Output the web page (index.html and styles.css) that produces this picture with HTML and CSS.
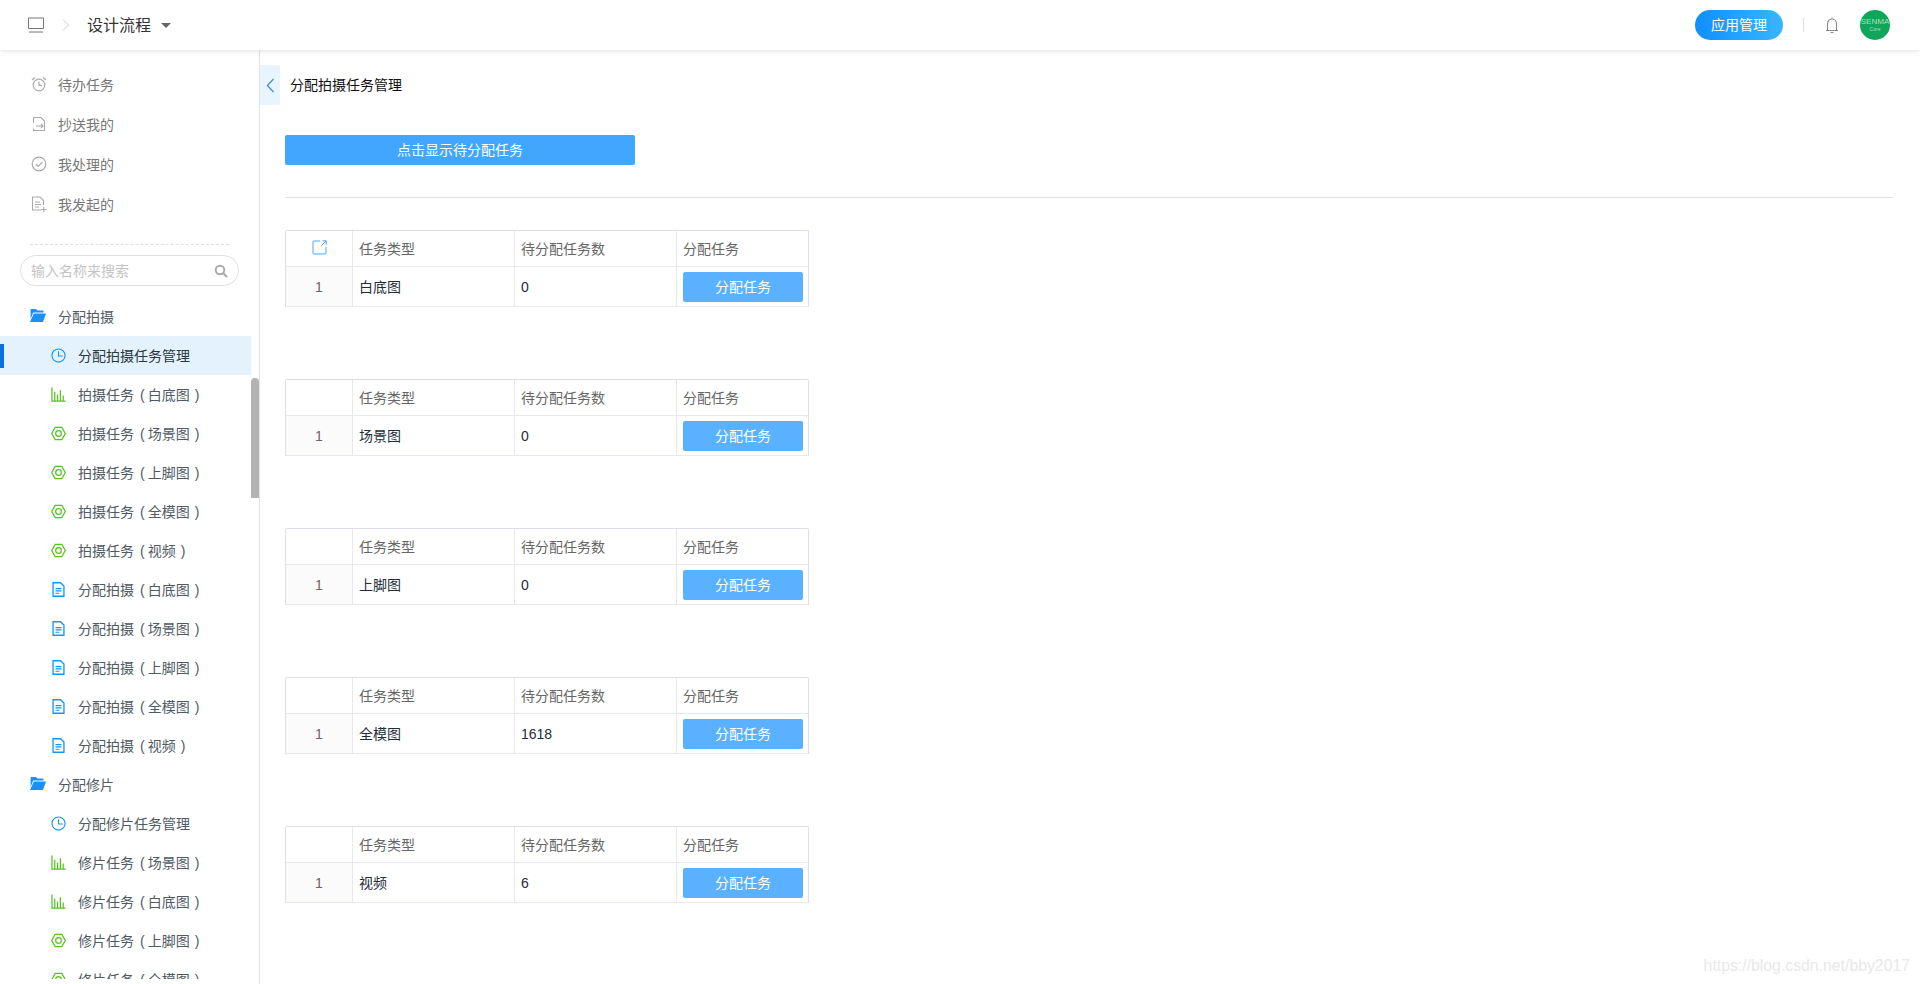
FILE: index.html
```html
<!DOCTYPE html>
<html lang="zh-CN">
<head>
    <meta charset="UTF-8">
    <title>分配拍摄任务管理</title>
    <link rel="stylesheet" href="styles.css">
</head>
<body>

    <svg class="defs" width="0" height="0">
        <symbol id="i-clock" viewBox="0 0 16 16">
            <circle cx="8" cy="8" r="7" fill="none" stroke="currentColor" stroke-width="1.2"/>
            <path d="M8 3.500V8.500H12.500" fill="none" stroke="currentColor" stroke-width="1.2"/>
        </symbol>
        <symbol id="i-chart" viewBox="0 0 16 16">
            <path d="M1 0.500V15H15.500M4 14.500V5M7 14.500V8M10 14.500V3.500M13 14.500V9" fill="none" stroke="currentColor" stroke-width="1.3"/>
        </symbol>
        <symbol id="i-nut" viewBox="0 0 16 16">
            <path d="M4.400 1.500H11.600L15.200 8L11.600 14.500H4.400L0.800 8Z" fill="none" stroke="currentColor" stroke-width="1.3"/>
            <circle cx="8" cy="8" r="3" fill="none" stroke="currentColor" stroke-width="1.3"/>
        </symbol>
        <symbol id="i-file" viewBox="0 0 16 16">
            <path d="M2.200 0.800H10.200L13.800 4.400V15.200H2.200Z" fill="none" stroke="currentColor" stroke-width="1.4"/>
            <path d="M4.800 7H11.200M4.800 9.500H11.200M4.800 12H9" fill="none" stroke="currentColor" stroke-width="1.3"/>
        </symbol>
        <symbol id="i-folder" viewBox="0 0 16 13">
            <path d="M1 0H6L7.400 1.600H13.500V3.400H3.200L0.800 9.600H0.600V0.400Z M3.800 4.400H16L13 13H0Z" fill="currentColor"/>
        </symbol>
    </svg>

    <header class="topbar">
        <svg class="top-icon" width="16" height="16" viewBox="0 0 16 16">
            <path d="M0.500 1H15.500V11.500H0.500ZM1 15H15" fill="none" stroke="#777" stroke-width="1"/>
        </svg>
        <svg class="crumb-arrow" width="8" height="12" viewBox="0 0 8 12">
            <path d="M1 0.500L6.500 6L1 11.500" fill="none" stroke="#ccc" stroke-width="1"/>
        </svg>
        <span class="app-title">设计流程</span>
        <span class="caret"></span>

        <div class="topbar-right">
            <button class="app-btn">应用管理</button>
            <span class="top-divider"></span>
            <svg class="bell" width="14" height="17" viewBox="0 0 14 17">
                <path d="M1 13.500H13M2.500 13.500V7C2.500 4.200 4.500 2 7 2C9.500 2 11.500 4.200 11.500 7V13.500M7 0.500V2M5.500 15.500H8.500" fill="none" stroke="#888" stroke-width="1.100"/>
            </svg>
            <div class="avatar">
                <span class="avatar-name">SENMA</span>
                <span class="avatar-sub">Core</span>
            </div>
        </div>
    </header>

    <div class="layout">
        <aside class="sidebar">
            <ul class="quick-list">
                <li>
                    <svg width="16" height="16" viewBox="0 0 16 16">
                        <circle cx="8" cy="9" r="5.800" fill="none" stroke="#aaa" stroke-width="1.200"/>
                        <path d="M8 5.500V9.300H11M1 4L4 1.500M15 4L12 1.500" fill="none" stroke="#aaa" stroke-width="1.200"/>
                    </svg>
                    待办任务
                </li>
                <li>
                    <svg width="16" height="16" viewBox="0 0 16 16">
                        <path d="M2.500 7V1.500H10L13.500 5V14.500H2.500V12.500M5 10H12M10 8L12 10L10 12" fill="none" stroke="#aaa" stroke-width="1.100"/>
                    </svg>
                    抄送我的
                </li>
                <li>
                    <svg width="16" height="16" viewBox="0 0 16 16">
                        <circle cx="8" cy="8" r="6.800" fill="none" stroke="#aaa" stroke-width="1.200"/>
                        <path d="M4.800 8.200L7.200 10.500L11.400 5.800" fill="none" stroke="#aaa" stroke-width="1.200"/>
                    </svg>
                    我处理的
                </li>
                <li>
                    <svg width="16" height="16" viewBox="0 0 16 16">
                        <path d="M10 14H1.500V1H9L12.500 4.500V9M4 6H9M4 8.500H10M4 11H8M10 13.500H15.500M12.800 11V16" fill="none" stroke="#aaa" stroke-width="1.100"/>
                    </svg>
                    我发起的
                </li>
            </ul>

            <div class="side-sep"></div>

            <div class="search-box">
                <span class="search-text">输入名称来搜索</span>
                <svg width="14" height="14" viewBox="0 0 14 14">
                    <circle cx="6" cy="6" r="4.300" fill="none" stroke="#aaa" stroke-width="2"/>
                    <path d="M9 9L13 13" stroke="#aaa" stroke-width="2.200"/>
                </svg>
            </div>

            <ul class="menu">
                <li class="menu-group"><svg class="ic-folder" width="16" height="13"><use href="#i-folder"/></svg>分配拍摄</li>
                <li class="menu-item active"><svg class="ic-blue"><use href="#i-clock"/></svg><span>分配拍摄任务管理</span></li>
                <li class="menu-item"><svg class="ic-green"><use href="#i-chart"/></svg><span>拍摄任务<i class="po">(</i>白底图<i class="pc">)</i></span></li>
                <li class="menu-item"><svg class="ic-green"><use href="#i-nut"/></svg><span>拍摄任务<i class="po">(</i>场景图<i class="pc">)</i></span></li>
                <li class="menu-item"><svg class="ic-green"><use href="#i-nut"/></svg><span>拍摄任务<i class="po">(</i>上脚图<i class="pc">)</i></span></li>
                <li class="menu-item"><svg class="ic-green"><use href="#i-nut"/></svg><span>拍摄任务<i class="po">(</i>全模图<i class="pc">)</i></span></li>
                <li class="menu-item"><svg class="ic-green"><use href="#i-nut"/></svg><span>拍摄任务<i class="po">(</i>视频<i class="pc">)</i></span></li>
                <li class="menu-item"><svg class="ic-blue"><use href="#i-file"/></svg><span>分配拍摄<i class="po">(</i>白底图<i class="pc">)</i></span></li>
                <li class="menu-item"><svg class="ic-blue"><use href="#i-file"/></svg><span>分配拍摄<i class="po">(</i>场景图<i class="pc">)</i></span></li>
                <li class="menu-item"><svg class="ic-blue"><use href="#i-file"/></svg><span>分配拍摄<i class="po">(</i>上脚图<i class="pc">)</i></span></li>
                <li class="menu-item"><svg class="ic-blue"><use href="#i-file"/></svg><span>分配拍摄<i class="po">(</i>全模图<i class="pc">)</i></span></li>
                <li class="menu-item"><svg class="ic-blue"><use href="#i-file"/></svg><span>分配拍摄<i class="po">(</i>视频<i class="pc">)</i></span></li>
                <li class="menu-group"><svg class="ic-folder" width="16" height="13"><use href="#i-folder"/></svg>分配修片</li>
                <li class="menu-item"><svg class="ic-blue"><use href="#i-clock"/></svg><span>分配修片任务管理</span></li>
                <li class="menu-item"><svg class="ic-green"><use href="#i-chart"/></svg><span>修片任务<i class="po">(</i>场景图<i class="pc">)</i></span></li>
                <li class="menu-item"><svg class="ic-green"><use href="#i-chart"/></svg><span>修片任务<i class="po">(</i>白底图<i class="pc">)</i></span></li>
                <li class="menu-item"><svg class="ic-green"><use href="#i-nut"/></svg><span>修片任务<i class="po">(</i>上脚图<i class="pc">)</i></span></li>
                <li class="menu-item"><svg class="ic-green"><use href="#i-nut"/></svg><span>修片任务<i class="po">(</i>全模图<i class="pc">)</i></span></li>
            </ul>
            <div class="side-scroll"></div>
        </aside>

        <main class="content">
            <div class="panel-head">
                <span class="collapse-tab">
                    <svg width="9" height="15" viewBox="0 0 9 15">
                        <path d="M7.500 1L1.500 7.500L7.500 14" fill="none" stroke="#4a8cc4" stroke-width="1.300"/>
                    </svg>
                </span>
                <span class="panel-title">分配拍摄任务管理</span>
            </div>

            <div class="panel-body">
                <button class="show-btn">点击显示待分配任务</button>
                <hr class="line">

                <table class="task-table">
                    <tr class="head-row">
                        <th class="col-index">
                            <svg width="15" height="15" viewBox="0 0 15 15">
                                <path d="M8 1H2Q1 1 1 2V13Q1 14 2 14H13Q14 14 14 13V7M9.500 5.500L14 1M10.500 0.800H14.200V4.500" fill="none" stroke="#42a6ff" stroke-width="1"/>
                            </svg>
                        </th>
                        <th class="col-type">任务类型</th>
                        <th class="col-count">待分配任务数</th>
                        <th class="col-action">分配任务</th>
                    </tr>
                    <tr>
                        <td class="row-no">1</td>
                        <td class="type-name">白底图</td>
                        <td>0</td>
                        <td><button class="assign-btn">分配任务</button></td>
                    </tr>
                </table>

                <table class="task-table">
                    <tr class="head-row">
                        <th class="col-index"></th>
                        <th class="col-type">任务类型</th>
                        <th class="col-count">待分配任务数</th>
                        <th class="col-action">分配任务</th>
                    </tr>
                    <tr>
                        <td class="row-no">1</td>
                        <td class="type-name">场景图</td>
                        <td>0</td>
                        <td><button class="assign-btn">分配任务</button></td>
                    </tr>
                </table>

                <table class="task-table">
                    <tr class="head-row">
                        <th class="col-index"></th>
                        <th class="col-type">任务类型</th>
                        <th class="col-count">待分配任务数</th>
                        <th class="col-action">分配任务</th>
                    </tr>
                    <tr>
                        <td class="row-no">1</td>
                        <td class="type-name">上脚图</td>
                        <td>0</td>
                        <td><button class="assign-btn">分配任务</button></td>
                    </tr>
                </table>

                <table class="task-table">
                    <tr class="head-row">
                        <th class="col-index"></th>
                        <th class="col-type">任务类型</th>
                        <th class="col-count">待分配任务数</th>
                        <th class="col-action">分配任务</th>
                    </tr>
                    <tr>
                        <td class="row-no">1</td>
                        <td class="type-name">全模图</td>
                        <td>1618</td>
                        <td><button class="assign-btn">分配任务</button></td>
                    </tr>
                </table>

                <table class="task-table">
                    <tr class="head-row">
                        <th class="col-index"></th>
                        <th class="col-type">任务类型</th>
                        <th class="col-count">待分配任务数</th>
                        <th class="col-action">分配任务</th>
                    </tr>
                    <tr>
                        <td class="row-no">1</td>
                        <td class="type-name">视频</td>
                        <td>6</td>
                        <td><button class="assign-btn">分配任务</button></td>
                    </tr>
                </table>
            </div>
        </main>
    </div>

    <div class="watermark">https://blog.csdn.net/bby2017</div>

</body>
</html>
```

FILE: styles.css
```css
* {
    box-sizing: border-box;
}

html, body {
    height: 100%;
}

body {
    margin: 0;
    overflow: hidden;
    font-family: "Liberation Sans", "Noto Sans CJK SC", sans-serif;
    font-size: 14px;
    background-color: #fff;
    color: #333;
}

ul {
    list-style: none;
    margin: 0;
    padding: 0;
}

button {
    font: inherit;
    border: none;
    cursor: pointer;
}

.defs {
    position: absolute;
}

.topbar {
    position: relative;
    z-index: 2;
    height: 50px;
    display: flex;
    align-items: center;
    padding: 0 30px 0 28px;
    background-color: #fff;
    box-shadow: 0 1px 5px rgba(0,0,0,0.12);
}

.crumb-arrow {
    margin-left: 18px;
}

.app-title {
    margin-left: 17px;
    padding-bottom: 2px;
    font-size: 16px;
    color: #333;
}

.caret {
    margin-left: 10px;
    border-left: 5px solid transparent;
    border-right: 5px solid transparent;
    border-top: 5px solid #666;
}

.topbar-right {
    margin-left: auto;
    display: flex;
    align-items: center;
}

.app-btn {
    width: 88px;
    height: 30px;
    padding: 0 0 2px;
    border-radius: 15px;
    background: linear-gradient(90deg, #0f8fff, #38b6ff);
    color: #fff;
}

.top-divider {
    width: 1px;
    height: 14px;
    margin: 0 21px 0 20px;
    background-color: #ddd;
}

.avatar {
    width: 30px;
    height: 30px;
    margin-left: 21px;
    border-radius: 50%;
    background-color: #10a65a;
    color: #a8dfc0;
    display: flex;
    flex-direction: column;
    align-items: center;
    justify-content: center;
    overflow: hidden;
    line-height: 1;
}

.avatar-name {
    font-size: 8px;
}

.avatar-sub {
    margin-top: 1px;
    font-size: 5px;
}

.layout {
    display: flex;
    height: calc(100% - 50px);
}

.sidebar {
    position: relative;
    flex: 0 0 260px;
    height: 100%;
    overflow: hidden;
    padding-top: 15px;
    padding-bottom: 5px;
    border-right: 1px solid #e4e4e4;
}

.quick-list li {
    height: 40px;
    display: flex;
    align-items: center;
    padding-left: 31px;
    padding-bottom: 2px;
    color: #777;
}

.quick-list svg {
    margin-right: 11px;
}

.side-sep {
    height: 0;
    margin: 19px 30px 10px;
    border-top: 1px dashed #ddd;
}

.search-box {
    width: 219px;
    height: 31px;
    margin-left: 20px;
    display: flex;
    align-items: center;
    justify-content: space-between;
    padding: 0 10px;
    border: 1px solid #e0e0e0;
    border-radius: 16px;
}

.search-text {
    padding-bottom: 2px;
    color: #c4c4c4;
}

.menu {
    width: 251px;
    margin-top: 11px;
    height: 682px;
    overflow: hidden;
}

.menu-group {
    height: 39px;
    display: flex;
    align-items: center;
    padding-left: 30px;
    padding-bottom: 2px;
    color: #535d66;
}

.ic-folder {
    margin-right: 12px;
    color: #1890ff;
}

.menu-item {
    position: relative;
    height: 39px;
    display: flex;
    align-items: center;
    padding-left: 51px;
    color: #4e5a64;
}

.menu-item span {
    padding-bottom: 2px;
    white-space: nowrap;
}

.menu-item svg {
    width: 15px;
    height: 15px;
    margin-right: 12px;
    margin-bottom: 1px;
}

.po,
.pc {
    font-style: normal;
}

.po {
    margin: 0 3px 0 6px;
}

.pc {
    margin-left: 5px;
}

.menu-item.active {
    background-color: #e3f2fd;
    color: #2b3640;
}

.menu-item.active::before {
    content: "";
    position: absolute;
    left: 0;
    top: 8px;
    width: 4px;
    height: 24px;
    background-color: #0a6fe0;
}

.ic-blue {
    color: #1296f5;
}

.ic-green {
    color: #52c41a;
}

.side-scroll {
    position: absolute;
    top: 328px;
    right: 0;
    width: 8px;
    height: 120px;
    border-radius: 4px 4px 0 0;
    background-color: #b3b3b3;
}

.content {
    flex: 1;
    min-width: 0;
    padding-top: 15px;
}

.panel-head {
    height: 40px;
    display: flex;
    align-items: center;
}

.collapse-tab {
    width: 20px;
    height: 40px;
    display: flex;
    align-items: center;
    justify-content: center;
    border-radius: 0 2px 2px 0;
    background-color: #e8f4ff;
}

.panel-title {
    margin-left: 10px;
    padding-bottom: 2px;
    color: #111;
}

.panel-body {
    padding: 30px 27px 0 25px;
}

.show-btn {
    display: block;
    width: 350px;
    height: 30px;
    padding: 0 0 2px;
    border-radius: 2px;
    background-color: #42a6ff;
    color: #fff;
}

.line {
    height: 1px;
    margin: 32px 0;
    border: none;
    background-color: #e1e1e6;
}

.task-table {
    width: 524px;
    table-layout: fixed;
    border-collapse: separate;
    border-spacing: 0;
    margin-bottom: 72px;
    border-top: 1px solid #dedee8;
    border-left: 1px solid #dedee8;
    border-right: 1px solid #dedee8;
    border-radius: 2px 2px 0 0;
}

.task-table th,
.task-table td {
    padding: 0 6px;
    text-align: left;
    font-weight: normal;
    border-bottom: 1px solid #e8e8ee;
    border-right: 1px solid #e8e8ee;
}

.task-table th:last-child,
.task-table td:last-child {
    border-right: none;
}

.task-table th {
    height: 36px;
    padding-bottom: 2px;
    color: #666;
}

.task-table td {
    height: 40px;
    color: #222c38;
}

.task-table .type-name {
    padding-bottom: 2px;
}

.task-table .col-index {
    width: 67px;
    padding-bottom: 0;
    text-align: center;
}

.col-index svg {
    display: block;
    margin: 0 auto 2px;
}

.col-type,
.col-count {
    width: 162px;
}

.task-table .row-no {
    text-align: center;
    background-color: #fbfbfb;
    color: #666;
}

.assign-btn {
    display: block;
    width: 120px;
    height: 30px;
    padding: 0 0 2px;
    border-radius: 2px;
    background-color: #59b1ff;
    color: #fff;
}

.watermark {
    position: absolute;
    right: 10px;
    bottom: 9px;
    font-size: 15.8px;
    color: #e8e8e8;
}
```
